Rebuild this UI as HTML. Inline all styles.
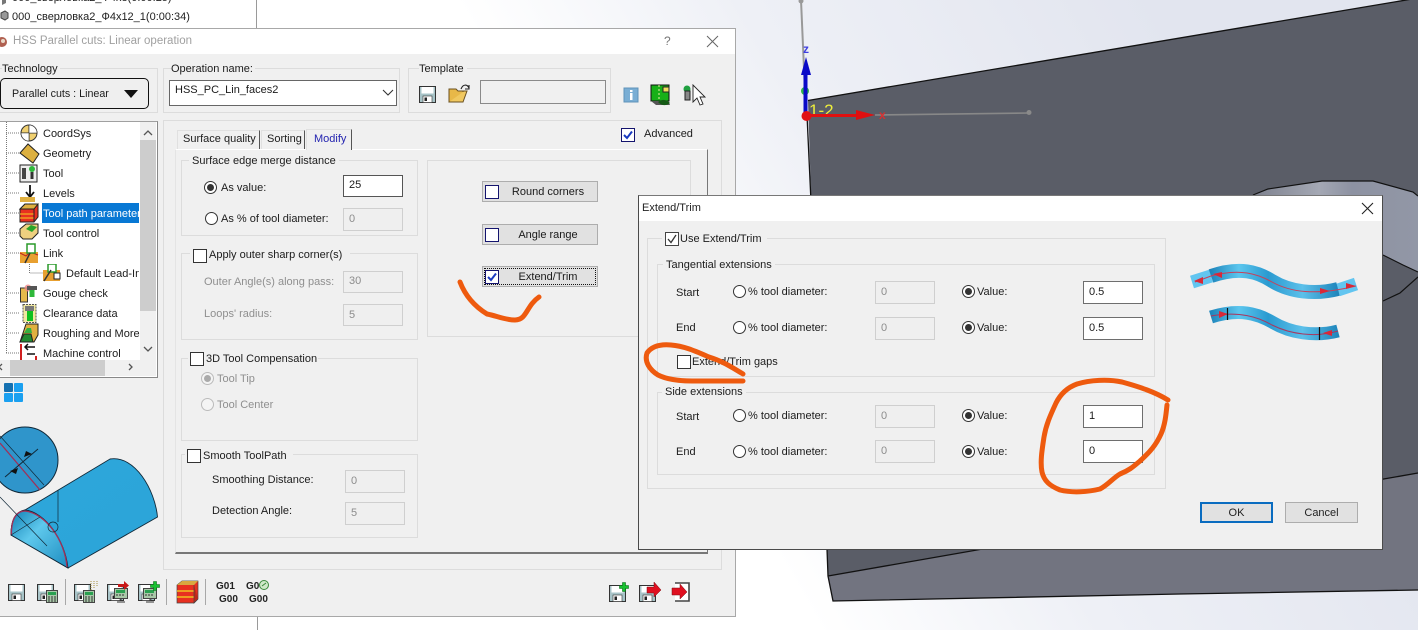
<!DOCTYPE html>
<html><head><meta charset="utf-8"><title>Extend/Trim</title>
<style>
html,body{margin:0;padding:0;width:1418px;height:630px;overflow:hidden;background:#fff}
body{position:relative;font:11px "Liberation Sans","Noto Sans CJK SC",sans-serif;color:#1a1a1a}
div{box-sizing:border-box}
svg{position:absolute;overflow:hidden}
.a{position:absolute}
.t{position:absolute;white-space:nowrap;line-height:14px;color:#1c1c1c;margin-top:1px}
.g{color:#8f8f8f}
.gb{position:absolute;border:1px solid #dcdcdc}
.i{position:absolute;background:#fff;border:1px solid #6e6e6e;padding:0 0 0 5px;line-height:20px;white-space:nowrap}
.d{position:absolute;background:#efefef;border:1px solid #cfcfcf;color:#8c8c8c;padding:0 0 0 5px;line-height:20px}
.c{position:absolute;width:14px;height:14px;background:#fff;border:1px solid #333}
.c.n{border-color:#14146e}
.r{position:absolute;width:13px;height:13px;background:#fff;border:1px solid #333;border-radius:50%}
.r.on:after{content:"";position:absolute;left:2px;top:2px;width:7px;height:7px;border-radius:50%;background:#333}
.r.dis{border-color:#bbb;background:#f4f4f4}
.r.dis.on:after{background:#aaa}
.bg{background:#f0f0f0}
.lab{background:#f0f0f0;padding:0 3px}
.b{position:absolute;background:#e1e1e1;border:1px solid #adadad;text-align:center;line-height:20px}
.p{padding-left:16px}
</style></head><body>

<!-- 3D viewport -->
<div class="a" style="left:0;top:0;width:1418px;height:630px;background:linear-gradient(60deg,#fff 46%,#eef0f6 62%,#e2e5ef 85%)"></div>
<svg style="left:0;top:0" width="1418" height="630">
<defs>
<linearGradient id="pk" x1="0" x2="1" y1="0" y2="0"><stop offset="0" stop-color="#7d818e"/><stop offset=".4" stop-color="#a4a8b4"/><stop offset=".6" stop-color="#8d92a2"/><stop offset="1" stop-color="#9297a6"/></linearGradient>
<linearGradient id="bl" x1="0" x2="1" y1="0" y2="1"><stop offset="0" stop-color="#1d7fb8"/><stop offset=".3" stop-color="#2da6da"/><stop offset="1" stop-color="#2ba4d8"/></linearGradient>
<linearGradient id="fr" x1="0" x2="1" y1="0" y2="1"><stop offset="0" stop-color="#0f7db2"/><stop offset=".4" stop-color="#5ec8ec"/><stop offset="1" stop-color="#1d8cc0"/></linearGradient>
</defs>
<path d="M808 100.500L1418 -2V480L828 576L827 549L811 195Z" fill="#5a5d67"/>
<path d="M828 576L1418 473V590L1180 594L833 601Z" fill="#727480"/>
<path d="M808 100.500L1418 -2" fill="none" stroke="#111" stroke-width="1.300"/>
<path d="M807 115L827 549L828 576L833 601L1180 594L1418 590M828 576L1418 473" fill="none" stroke="#111" stroke-width="1.300"/>
<path d="M1253 195L1268 189L1322 181L1373 181L1413 192L1418 196V272L1383 255L1253 240Z" fill="url(#pk)"/>
<path d="M1253 195L1268 189L1322 181L1373 181L1413 192L1418 196M1383 255L1403 265L1418 272M1418 277L1400 293L1383 301" fill="none" stroke="#111" stroke-width="1.200"/>
<path d="M801 0L806 115" stroke="#999" stroke-width="2"/>
<path d="M875 115L1029 113" stroke="#888" stroke-width="1.600"/>
<circle cx="1029" cy="112.500" r="2.500" fill="#8a8a8a"/>
<circle cx="801" cy="1" r="2.500" fill="#999"/>
<circle cx="805" cy="91" r="4" fill="#2fb84a"/>
<text x="809" y="116" font-family="Liberation Sans" font-size="17" fill="#eded3c">1-2</text>
<path d="M805.500 114V75" stroke="#0a0ac8" stroke-width="4"/>
<path d="M806 57L801 75H811Z" fill="#0a0ac8"/>
<path d="M806 115.500H858" stroke="#e01010" stroke-width="3"/>
<path d="M875 115L856 110V120Z" fill="#e01010"/>
<circle cx="806.500" cy="116" r="5" fill="#e01015"/>
<text x="803" y="53" font-family="Liberation Sans" font-size="12" font-weight="bold" fill="#3f3fe0">z</text>
<text x="879" y="119" font-family="Liberation Sans" font-size="12" font-weight="bold" fill="#d83030">x</text>
</svg>

<!-- Top-left tree behind -->
<div class="a" style="left:0;top:0;width:257px;height:28px;background:#fff;border-right:1px solid #9a9a9a"></div>
<div class="t" style="left:12px;top:-10px;color:#222">000_сверловка2_Ф4х8(0:00:25)</div>
<div class="t" style="left:12px;top:9px;color:#222">000_сверловка2_Ф4х12_1(0:00:34)</div>
<svg style="left:0;top:0" width="12" height="28"><path d="M2 -4l4 2v5l-4 2z" fill="#777"/><path d="M1 13l4-2 3 2v5l-3 2-4-2z" fill="#999" stroke="#444"/></svg>
<div class="a" style="left:257px;top:616px;width:1px;height:14px;background:#9a9a9a"></div>

<!-- Left dialog -->
<div class="a bg" style="left:-2px;top:28px;width:738px;height:589px;border:1px solid #a8a8a8"></div>
<div class="a" style="left:0;top:29px;width:735px;height:25px;background:#fff"></div>
<svg style="left:0;top:36px" width="9" height="12"><circle cx="2" cy="6" r="5" fill="#b06050"/><circle cx="3" cy="5" r="2" fill="#e8d8c8"/></svg>
<div class="t" style="left:13px;top:33px;font-size:11.500px;color:#a0a0a0">HSS Parallel cuts: Linear operation</div>
<div class="t" style="left:664px;top:33px;font-size:12px;color:#777">?</div>
<svg style="left:706px;top:35px" width="13" height="13"><path d="M1 1L12 12M12 1L1 12" stroke="#666" stroke-width="1"/></svg>

<div class="gb" style="left:-2px;top:68px;width:160px;height:45px"></div>
<div class="t bg" style="left:2px;top:61px;padding-right:2px">Technology</div>
<div class="a" style="left:0;top:78px;width:149px;height:31px;border:1px solid #111;border-radius:5px;background:#efefef"></div>
<div class="t" style="left:12px;top:86px;font-size:10.700px">Parallel cuts : Linear</div>
<svg style="left:124px;top:90px" width="15" height="9"><path d="M0 0H14L7 8Z" fill="#111"/></svg>

<div class="gb" style="left:163px;top:68px;width:237px;height:45px"></div>
<div class="t bg" style="left:171px;top:61px;padding:0 2px 0 0">Operation name:</div>
<div class="i" style="left:169px;top:80px;width:228px;height:26px;border-color:#666;line-height:19px">HSS_PC_Lin_faces2</div>
<svg style="left:382px;top:89px" width="12" height="8"><path d="M1 1L6 6L11 1" fill="none" stroke="#333" stroke-width="1.100"/></svg>

<div class="gb" style="left:408px;top:68px;width:203px;height:45px"></div>
<div class="t bg" style="left:419px;top:61px;padding:0 3px 0 0">Template</div>
<div class="a" style="left:480px;top:80px;width:126px;height:24px;background:#f0f0f0;border:1px solid #8a8a8a"></div>

<div class="gb" style="left:163px;top:120px;width:559px;height:450px"></div>

<!-- Tree -->
<div class="a" style="left:-2px;top:121px;width:160px;height:257px;background:#fff;border:1px solid #a0a0a0;border-right-color:#888;border-bottom-color:#888"></div>
<div class="a" style="left:140px;top:122px;width:16px;height:238px;background:#f0f0f0"></div>
<div class="a" style="left:140px;top:140px;width:16px;height:171px;background:#cdcdcd"></div>
<div class="a" style="left:0;top:360px;width:156px;height:16px;background:#f0f0f0"></div>
<div class="a" style="left:10px;top:360px;width:95px;height:16px;background:#cdcdcd"></div>
<svg style="left:0;top:122px" width="157" height="256">
<path d="M144 13L148 9L152 13M144 225L148 229L152 225" fill="none" stroke="#555" stroke-width="1.300"/>
<path d="M2 242L-1 245L2 248M129 242L132 245L129 248" fill="none" stroke="#555" stroke-width="1.300"/>
<path d="M6.500 0V231M6 11H20M6 31H20M6 51H20M6 71H20M6 91H20M6 111H20M6 131H20M6 171H20M6 191H20M6 211H20M6 231H20M29.500 140V151H43" stroke="#777" stroke-dasharray="1 1" fill="none"/>
</svg>
<div class="a" style="left:42px;top:203px;width:97px;height:20px;background:#0878d4"></div>
<div class="t" style="left:43px;top:126px">CoordSys</div>
<div class="t" style="left:43px;top:146px">Geometry</div>
<div class="t" style="left:43px;top:166px">Tool</div>
<div class="t" style="left:43px;top:186px">Levels</div>
<div class="t" style="left:43px;top:206px;width:96px;overflow:hidden;color:#fff">Tool path parameters</div>
<div class="t" style="left:43px;top:226px">Tool control</div>
<div class="t" style="left:43px;top:246px">Link</div>
<div class="t" style="left:66px;top:266px;width:73px;overflow:hidden">Default Lead-In</div>
<div class="t" style="left:43px;top:286px">Gouge check</div>
<div class="t" style="left:43px;top:306px">Clearance data</div>
<div class="t" style="left:43px;top:326px">Roughing and More</div>
<div class="t" style="left:43px;top:346px;width:96px;overflow:hidden">Machine control</div>

<!-- Tree icons -->
<svg style="left:18px;top:122px" width="24" height="240">
<circle cx="11" cy="11" r="8" fill="#f0d070" stroke="#333"/><path d="M11 3V19M3 11H19" stroke="#333"/><path d="M11 11V3A8 8 0 0 1 19 11ZM11 11V19A8 8 0 0 1 3 11Z" fill="#fff" stroke="#333" stroke-width=".6"/>
<path d="M2 31L10 22L21 32L15 41Z" fill="#dcb040" stroke="#222"/>
<rect x="2" y="43" width="17" height="17" fill="#eee" stroke="#222"/><rect x="4" y="46" width="4" height="11" fill="#444"/><circle cx="14" cy="47" r="3" fill="#2eb83a"/><rect x="12.500" y="50" width="3" height="7" fill="#333"/>
<path d="M12 63V74M8 70L12 75L16 70" stroke="#111" stroke-width="1.800" fill="none"/><rect x="2" y="75" width="15" height="5" fill="#e0b040"/>
<path d="M2 87L7 82H20V95L16 100H2Z" fill="#e83020" stroke="#222"/><path d="M2 92H16M2 96H16" stroke="#f0b020" stroke-width="1.300"/><path d="M2 87H16L20 82H7Z" stroke="#222" fill="#e0b040"/><path d="M16 87V100" stroke="#222"/>
<path d="M2 107L8 102H20V111L14 117H5L2 114Z" fill="#eed080" stroke="#222"/><path d="M8 107L13 103L19 105L14 110Z" fill="#2aa52a"/>
<rect x="2" y="130" width="18" height="11" fill="#e8a030"/><path d="M2 131L8 134L12 130L20 133" stroke="#c02020" fill="none"/><rect x="9" y="122" width="8" height="9" fill="#fff" stroke="#2a9a2a" stroke-width="1.500"/><path d="M7 141L12 131" stroke="#333" stroke-width="1.500"/>
</svg>
<svg style="left:18px;top:264px" width="50" height="20">
<rect x="25" y="6" width="17" height="11" fill="#e8a030"/><rect x="30" y="0" width="8" height="8" fill="#fff" stroke="#2a9a2a" stroke-width="1.500"/><path d="M26 17L33 6" stroke="#333" stroke-width="1.500"/><rect x="36" y="9" width="6" height="6" fill="#fff" stroke="#222"/>
</svg>
<svg style="left:18px;top:283px" width="24" height="80">
<rect x="2.500" y="5" width="7" height="14" fill="#e4ba4c" stroke="#333"/><circle cx="10" cy="5" r="3.500" fill="#e88" opacity=".8"/><rect x="9" y="3" width="10" height="4" fill="#555"/><rect x="11.500" y="7" width="5" height="7" fill="#2eb83a"/>
<rect x="5" y="21.500" width="13" height="18" fill="#f0e8a0" stroke="#555" stroke-dasharray="2 1"/><rect x="7" y="23" width="9" height="5" fill="#777"/><rect x="9" y="28" width="6" height="10" fill="#0fc020"/>
<path d="M2 59L8 41H20V52L16 59Z" fill="#e0b040" stroke="#222"/><path d="M2 59H15L13 51H6Z" fill="#208a30" stroke="#222"/><path d="M6 50H14L13 45H9Z" fill="#34b040"/>
<path d="M3 61V77" stroke="#d02020" stroke-width="2"/><path d="M17 64H7M10 61L7 64L10 67M9 71H17" stroke="#111" stroke-width="1.500" fill="none"/><path d="M18 73V77" stroke="#d02020" stroke-width="2"/>
</svg>
<svg style="left:3px;top:382px" width="22" height="21"><rect x="1" y="1" width="9" height="9" rx="1" fill="#1470b0"/><rect x="11" y="1" width="9" height="9" rx="1" fill="#1aa0f0"/><rect x="1" y="11" width="9" height="9" rx="1" fill="#1aa0f0"/><rect x="11" y="11" width="9" height="9" rx="1" fill="#1aa0f0"/></svg>

<!-- Illustration -->
<svg style="left:0;top:420px" width="165" height="155" viewBox="0 420 165 155">
<path d="M11 535C11 520 15 512 25 510L110 459C135 455 155 490 157.500 517L68 568Z" fill="url(#bl)" stroke="#102838" stroke-width=".9"/>
<path d="M11 535C11 520 15 512 25 510C45 512 65 540 68 568Z" fill="url(#fr)" stroke="#102838" stroke-width=".9"/>
<path d="M11.500 535C11 518 17 511 25 511C45 513 65 540 67 567" fill="none" stroke="#a03058" stroke-width="1.300"/>
<path d="M11 535L40 517M0 497L47 546M58 490V522" stroke="#102838" stroke-width=".7" fill="none"/>
<circle cx="53" cy="527" r="5" fill="none" stroke="#102838" stroke-width=".7"/>
<circle cx="25" cy="460" r="33" fill="#2f95cb" stroke="#102838"/>
<path d="M0 443L40 490" stroke="#a03058" stroke-width="1.300"/>
<path d="M0 436L44 485" stroke="#102838" stroke-width=".7"/>
<path d="M5 477L38 449" stroke="#102838"/>
<path d="M10 471L18 468L16 474ZM32 454L24 457L26 451Z" fill="#111"/>
</svg>

<!-- Small top icons -->
<svg style="left:415px;top:82px" width="60" height="24">
<use href="#fl" x="4" y="4"/>
<path d="M34 20L37 9H52L48 20Z" fill="#f0c860" stroke="#6a5020"/><path d="M34 20V7H41L43 9H48V10" fill="#e8b848" stroke="#6a5020"/><path d="M46 7C48 2 52 2 54 6M54 3V7H50" fill="none" stroke="#222" stroke-width="1.100"/>
</svg>
<svg style="left:620px;top:82px" width="90" height="26">
<rect x="4" y="6" width="14" height="14" fill="#7aaed4" stroke="#5f93ba"/><rect x="10" y="8" width="2.500" height="2" fill="#fff"/><rect x="10" y="11" width="2.500" height="7" fill="#fff"/>
<rect x="31" y="3" width="18" height="16" fill="#18b018" stroke="#111"/><rect x="43" y="5" width="6" height="5" fill="#f0e060" stroke="#222"/><path d="M39 3V19" stroke="#e8f0a0" stroke-dasharray="2 2"/><path d="M31 19H48L50 23H36Z" fill="#555"/><path d="M38 20C42 17 46 17 50 21C46 24 42 24 38 20Z" fill="#155a15"/>
<circle cx="67" cy="7" r="3.500" fill="#20a040"/><rect x="65" y="9" width="5" height="9" fill="#888" stroke="#222"/>
<path d="M73 3V20L77 16L80 23L83 22L80 15H85Z" fill="#fff" stroke="#222" stroke-width=".9"/>
</svg>
<div class="c n" style="left:621px;top:128px"></div>
<svg style="left:621px;top:128px" width="14" height="14"><path d="M3 7L6 10L11 3.500" fill="none" stroke="#1a3ac0" stroke-width="2"/></svg>
<div class="t" style="left:644px;top:126px">Advanced</div>

<!-- Tabs -->
<div class="a bg" style="left:175px;top:149px;width:533px;height:405px;border-right:1px solid #777;border-bottom:2px solid #777;border-top:1px solid #fff;border-left:1px solid #e4e4e4"></div>
<div class="a" style="left:177px;top:130px;width:83px;height:19px;border:1px solid #e0e0e0;border-right:1px solid #555;border-bottom:0"></div>
<div class="a" style="left:261px;top:130px;width:44px;height:19px;border:1px solid #e0e0e0;border-right:1px solid #555;border-bottom:0"></div>
<div class="a bg" style="left:306px;top:129px;width:46px;height:21px;border:1px solid #e0e0e0;border-right:1px solid #555;border-bottom:0"></div>
<div class="t" style="left:183px;top:131px">Surface quality</div>
<div class="t" style="left:267px;top:131px">Sorting</div>
<div class="t" style="left:314px;top:131px;color:#2424b0">Modify</div>

<!-- Groups -->
<div class="gb" style="left:181px;top:160px;width:237px;height:76px"></div>
<div class="t lab" style="left:189px;top:153px">Surface edge merge distance</div>
<div class="r on" style="left:204px;top:181px"></div>
<div class="t" style="left:221px;top:180px">As value:</div>
<div class="i" style="left:343px;top:175px;width:60px;height:22px;border-color:#555;line-height:19px">25</div>
<div class="r" style="left:205px;top:212px"></div>
<div class="t" style="left:221px;top:211px">As % of tool diameter:</div>
<div class="d" style="left:343px;top:208px;width:60px;height:23px">0</div>

<div class="gb" style="left:181px;top:253px;width:237px;height:87px"></div>
<div class="a bg" style="left:190px;top:248px;width:160px;height:14px"></div>
<div class="c" style="left:193px;top:249px"></div>
<div class="t" style="left:209px;top:247px">Apply outer sharp corner(s)</div>
<div class="t g" style="left:204px;top:274px">Outer Angle(s) along pass:</div>
<div class="d" style="left:343px;top:271px;width:60px;height:22px;line-height:19px">30</div>
<div class="t g" style="left:204px;top:306px">Loops' radius:</div>
<div class="d" style="left:343px;top:304px;width:60px;height:22px">5</div>

<div class="gb" style="left:181px;top:358px;width:237px;height:83px"></div>
<div class="a bg" style="left:188px;top:352px;width:130px;height:14px"></div>
<div class="c" style="left:190px;top:352px"></div>
<div class="t" style="left:206px;top:351px">3D Tool Compensation</div>
<div class="r dis on" style="left:201px;top:372px"></div>
<div class="t g" style="left:217px;top:371px">Tool Tip</div>
<div class="r dis" style="left:201px;top:398px"></div>
<div class="t g" style="left:217px;top:397px">Tool Center</div>

<div class="gb" style="left:181px;top:454px;width:237px;height:84px"></div>
<div class="a bg" style="left:185px;top:448px;width:108px;height:14px"></div>
<div class="c" style="left:187px;top:449px"></div>
<div class="t" style="left:203px;top:448px">Smooth ToolPath</div>
<div class="t" style="left:212px;top:472px">Smoothing Distance:</div>
<div class="d" style="left:345px;top:470px;width:60px;height:23px">0</div>
<div class="t" style="left:212px;top:503px">Detection Angle:</div>
<div class="d" style="left:345px;top:502px;width:60px;height:23px">5</div>

<div class="gb" style="left:427px;top:160px;width:264px;height:177px"></div>
<div class="b p" style="left:482px;top:181px;width:116px;height:21px">Round corners</div>
<div class="c n" style="left:485px;top:185px"></div>
<div class="b p" style="left:482px;top:224px;width:116px;height:21px">Angle range</div>
<div class="c n" style="left:485px;top:228px"></div>
<div class="b p" style="left:482px;top:266px;width:116px;height:21px">Extend/Trim</div>
<div class="a" style="left:484px;top:268px;width:112px;height:17px;border:1px dotted #111"></div>
<div class="c n" style="left:485px;top:270px"></div>
<svg style="left:485px;top:270px" width="14" height="14"><path d="M3 7L6 10L11 3.500" fill="none" stroke="#1a3ac0" stroke-width="2"/></svg>

<!-- Toolbar -->
<svg style="left:0;top:578px" width="210" height="30" viewBox="0 578 210 30">
<defs>
<symbol id="fl" width="17" height="17" viewBox="0 0 17 17" overflow="visible"><path d="M.5 .5H16.500V16.500H.5Z" fill="#a8c4c8" stroke="#333"/><rect x="2.500" y="1" width="12" height="6.500" fill="#fff"/><rect x="4" y="10" width="9" height="6.500" fill="#fff" stroke="#333" stroke-width=".6"/><rect x="5.500" y="11.500" width="2.500" height="3.500" fill="#222"/></symbol>
<symbol id="calc" width="12" height="13" viewBox="0 0 12 13"><rect x=".5" y=".5" width="11" height="12" fill="#a8c8a8" stroke="#444"/><rect x="2" y="2" width="8" height="3" fill="#2aa050"/><path d="M2 7h2M5 7h2M8 7h2M2 9h2M5 9h2M8 9h2M2 11h2M5 11h2M8 11h2" stroke="#333"/></symbol>
<symbol id="mon" width="14" height="15" viewBox="0 0 14 15"><rect x=".5" y=".5" width="13" height="10" fill="#a8c8a8" stroke="#444"/><rect x="2" y="2" width="9" height="3" fill="#2aa050"/><path d="M2 7h2M5 7h2M8 7h2M7 11V13M3 14H11" stroke="#333"/></symbol>
<symbol id="pl" width="10" height="10" viewBox="0 0 10 10"><path d="M3.500 .5H6.500V3.500H9.500V6.500H6.500V9.500H3.500V6.500H.5V3.500H3.500Z" fill="#18c030" stroke="#0a6a18" stroke-width=".6"/></symbol>
</defs>
<use href="#fl" x="8" y="584"/>
<use href="#fl" x="37" y="584"/><use href="#calc" x="46" y="590"/>
<path d="M65.500 579V605M166.500 579V605M205.500 579V605" stroke="#a8a8a8"/>
<use href="#fl" x="74" y="584"/><use href="#calc" x="83" y="590"/><path d="M91 581V590M94 581V588M97 581V586" stroke="#a89040" stroke-dasharray="1 1"/>
<use href="#fl" x="107" y="584"/><use href="#mon" x="114" y="588"/><path d="M118 584H124V581L129 585.500L124 590V587H118Z" fill="#c81818"/>
<use href="#fl" x="138" y="584"/><use href="#mon" x="143" y="588"/><use href="#pl" x="150" y="581"/>
<path d="M177 585L182 581H198V599L194 603H177Z" fill="#e83020" stroke="#444" stroke-width=".7"/><path d="M177 585H194L198 581L182 581Z" fill="#d8a840"/><path d="M177 591H194M177 597H194" stroke="#f0c020" stroke-width="1.600"/><path d="M194 585V603L198 599" fill="#c02818" stroke="#444" stroke-width=".7"/>
</svg>
<div class="t" style="left:216px;top:580px;font-size:10px;font-weight:bold;line-height:13px;color:#222;margin:0">G01<br><span style="margin-left:3px">G00</span></div>
<div class="t" style="left:246px;top:580px;font-size:10px;font-weight:bold;line-height:13px;color:#222;margin:0">G0<br><span style="margin-left:3px">G00</span></div>
<svg style="left:258px;top:579px" width="12" height="12"><circle cx="6" cy="6" r="4.500" fill="#cfe8c8" stroke="#3a8a3a"/><path d="M4 7L8 4" stroke="#3a8a3a"/></svg>
<svg style="left:605px;top:578px" width="90" height="28" viewBox="605 578 90 28">
<use href="#fl" x="609" y="585"/><use href="#pl" x="619" y="582"/>
<use href="#fl" x="639" y="585"/><path d="M647 587H654V582L661 590L654 597V593H647Z" fill="#e01020" stroke="#7a0a10" stroke-width=".5"/>
<path d="M675 583H689V601H675" fill="#fff" stroke="#444" stroke-width="1.600"/><path d="M672 588H680V584L687 592L680 599V595H672Z" fill="#e01020" stroke="#7a0a10" stroke-width=".5"/>
</svg>

<!-- Extend/Trim dialog -->
<div class="a bg" style="left:638px;top:195px;width:745px;height:355px;border:1px solid #4a4a4a;border-top-color:#777"></div>
<div class="a" style="left:639px;top:196px;width:743px;height:25px;background:#fff"></div>
<div class="t" style="left:642px;top:200px;color:#222">Extend/Trim</div>
<svg style="left:1361px;top:202px" width="13" height="13"><path d="M1 1L12 12M12 1L1 12" stroke="#222" stroke-width="1.100"/></svg>

<div class="gb" style="left:647px;top:238px;width:519px;height:251px"></div>
<div class="a bg" style="left:662px;top:232px;width:105px;height:14px"></div>
<div class="c" style="left:665px;top:232px;border-color:#444"></div>
<svg style="left:665px;top:232px" width="14" height="14"><path d="M3 7L6 10.500L11 3" fill="none" stroke="#333" stroke-width="1.300"/></svg>
<div class="t" style="left:680px;top:231px">Use Extend/Trim</div>

<div class="gb" style="left:657px;top:264px;width:498px;height:113px"></div>
<div class="t lab" style="left:663px;top:257px">Tangential extensions</div>
<div class="t" style="left:676px;top:285px">Start</div>
<div class="r" style="left:733px;top:285px"></div>
<div class="t" style="left:748px;top:284px">% tool diameter:</div>
<div class="d" style="left:875px;top:281px;width:60px;height:23px">0</div>
<div class="r on" style="left:962px;top:285px"></div>
<div class="t" style="left:977px;top:284px">Value:</div>
<div class="i" style="left:1083px;top:281px;width:60px;height:23px">0.5</div>
<div class="t" style="left:676px;top:320px">End</div>
<div class="r" style="left:733px;top:321px"></div>
<div class="t" style="left:748px;top:320px">% tool diameter:</div>
<div class="d" style="left:875px;top:317px;width:60px;height:23px">0</div>
<div class="r on" style="left:962px;top:321px"></div>
<div class="t" style="left:977px;top:320px">Value:</div>
<div class="i" style="left:1083px;top:317px;width:60px;height:23px">0.5</div>
<div class="c" style="left:677px;top:355px"></div>
<div class="t" style="left:692px;top:354px">Extend/Trim gaps</div>

<div class="gb" style="left:657px;top:392px;width:498px;height:83px"></div>
<div class="t lab" style="left:662px;top:384px">Side extensions</div>
<div class="t" style="left:676px;top:409px">Start</div>
<div class="r" style="left:733px;top:409px"></div>
<div class="t" style="left:748px;top:408px">% tool diameter:</div>
<div class="d" style="left:875px;top:405px;width:60px;height:23px">0</div>
<div class="r on" style="left:962px;top:409px"></div>
<div class="t" style="left:977px;top:408px">Value:</div>
<div class="i" style="left:1083px;top:405px;width:60px;height:23px">1</div>
<div class="t" style="left:676px;top:444px">End</div>
<div class="r" style="left:733px;top:445px"></div>
<div class="t" style="left:748px;top:444px">% tool diameter:</div>
<div class="d" style="left:875px;top:440px;width:60px;height:23px">0</div>
<div class="r on" style="left:962px;top:445px"></div>
<div class="t" style="left:977px;top:444px">Value:</div>
<div class="i" style="left:1083px;top:440px;width:60px;height:23px">0</div>

<div class="b" style="left:1200px;top:502px;width:73px;height:21px;border:2px solid #0a6cc0;line-height:19px;color:#222">OK</div>
<div class="b" style="left:1285px;top:502px;width:73px;height:21px;color:#222">Cancel</div>

<!-- Ribbons -->
<svg style="left:1185px;top:255px" width="180" height="95" viewBox="1185 255 180 95">
<defs><linearGradient id="rb" gradientUnits="userSpaceOnUse" x1="1211" x2="1338" y1="0" y2="0"><stop offset="0" stop-color="#1f86bc"/><stop offset=".22" stop-color="#5cc6ee"/><stop offset=".45" stop-color="#2a9ad0"/><stop offset=".72" stop-color="#5cc0ea"/><stop offset="1" stop-color="#1f86bc"/></linearGradient></defs>
<path d="M1192 282L1211 276" stroke="#62c5f0" stroke-width="13" fill="none"/>
<path d="M1338 290L1356 284" stroke="#62c5f0" stroke-width="13" fill="none"/>
<path d="M1211 276C1240 266 1258 272 1272 281C1290 292 1315 295 1338 289" stroke="url(#rb)" stroke-width="14" fill="none"/>
<path d="M1195 282L1211 276C1240 268 1258 274 1272 282C1290 292 1315 296 1356 286" stroke="#c8405a" stroke-width="1" fill="none"/>
<path d="M1194 281L1203 277V284ZM1213 274L1222 272V278ZM1356 286L1346 283V289ZM1330 291L1320 288V294Z" fill="#d82838"/>
<path d="M1211 317C1240 308 1258 314 1272 322C1290 333 1315 337 1338 331" stroke="url(#rb)" stroke-width="13" fill="none"/>
<path d="M1211 316C1240 311 1258 317 1272 325C1290 334 1315 338 1338 331" stroke="#a83860" stroke-width="1" fill="none"/>
<path d="M1228 314L1219 311V318ZM1323 333L1332 330V336Z" fill="#d82838"/>
<path d="M1227.500 308V320M1319.500 327V340" stroke="#111" stroke-width="1.200"/>
</svg>

<!-- Orange hand-drawn annotations -->
<svg style="left:0;top:0" width="1418" height="630">
<g fill="none" stroke="#ee5a0e" stroke-width="5" stroke-linecap="round" stroke-linejoin="round">
<path d="M460 282C465 295 474 306 487 314C497 316 505 320 515 320C527 320 526 306 539 297"/>
<path d="M743 374C730 366 722 361 709 357C695 351 684 346 671 345C660 344 652 346 647 353C644 362 650 370 658 375C668 380 680 381 692 381L743 381"/>
<path d="M1168 400C1155 392 1140 387 1122 382C1108 379 1090 380 1077 384C1066 388 1060 395 1056 403C1050 416 1046 425 1044 437C1042 450 1040 462 1042 472C1044 481 1050 486 1060 490C1072 493 1088 492 1100 489C1108 485 1113 478 1120 474C1130 470 1134 466 1140 461C1150 452 1156 445 1161 434C1165 425 1166 415 1167 405"/>
</g>
</svg>
</body></html>
